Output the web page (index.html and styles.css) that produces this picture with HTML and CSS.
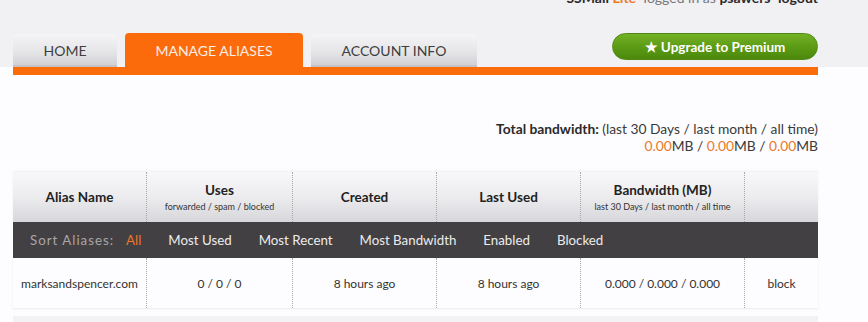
FILE: index.html
```html
<!DOCTYPE html>
<html>
<head>
<meta charset="utf-8">
<link rel="stylesheet" href="styles.css">
</head>
<body>
<div class="top">
  <div class="userline">
    <b>SSMail</b> <b class="lite">Lite</b> <span class="sep"></span>logged in as <b>psawers</b> <span class="sep"></span><b>logout</b>
  </div>
  <div class="navrow">
    <a class="tab">HOME</a>
    <a class="tab active">MANAGE ALIASES</a>
    <a class="tab">ACCOUNT INFO</a>
    <a class="upgrade">&#9733; Upgrade to Premium</a>
  </div>
</div>
<div class="wrap">
  <div class="orange-bar"></div>
  <div class="totals">
    <div><b>Total bandwidth:</b> (last 30 Days / last month / all time)</div>
    <div><span class="o">0.00</span>MB / <span class="o">0.00</span>MB / <span class="o">0.00</span>MB</div>
  </div>
  <div class="table">
    <div class="thead">
      <div class="c c1"><div class="h">Alias Name</div></div>
      <div class="c c2"><div class="h">Uses</div><div class="sub">forwarded / spam / blocked</div></div>
      <div class="c c3"><div class="h">Created</div></div>
      <div class="c c4"><div class="h">Last Used</div></div>
      <div class="c c5"><div class="h">Bandwidth (MB)</div><div class="sub">last 30 Days / last month / all time</div></div>
      <div class="c c6"></div>
    </div>
    <div class="sortbar">
      <span class="lbl">Sort Aliases:</span>
      <span class="on">All</span>
      <span>Most Used</span>
      <span>Most Recent</span>
      <span>Most Bandwidth</span>
      <span>Enabled</span>
      <span>Blocked</span>
    </div>
    <div class="row">
      <div class="c c1">marksandspencer.com</div>
      <div class="c c2">0 / 0 / 0</div>
      <div class="c c3">8 hours ago</div>
      <div class="c c4">8 hours ago</div>
      <div class="c c5">0.000 / 0.000 / 0.000</div>
      <div class="c c6">block</div>
    </div>
    <div class="row alt"></div>
  </div>
</div>
</body>
</html>
```

FILE: styles.css
```css
html, body { margin: 0; padding: 0; }
body {
  background: #fdfcfe;
  font-family: Lato, "Open Sans", sans-serif;
  color: #333;
  overflow: hidden;
  height: 322px;
}
.top {
  display: flow-root;
  background: #f1f0f3;
  height: 67px;
}
.userline {
  height: 14px;
  line-height: 14px;
  margin-top: -9px;
  font-size: 14px;
  color: #777;
  text-align: right;
  width: 818px;
}
.userline b { color: #2a2a2a; font-weight: 700; }
.userline b.lite { color: #f07623; }
.userline .sep { display: inline-block; width: 4px; }
.navrow {
  display: flex;
  align-items: flex-start;
  margin-left: 13px;
  width: 805px;
  margin-top: 28px;
  gap: 8px;
}
.tab {
  display: flex;
  align-items: center;
  justify-content: center;
  height: 33px;
  margin-top: 1px;
  background: linear-gradient(#f5f5f7, #e3e3e6 60%, #cfcfd3);
  border-radius: 4px 4px 0 0;
  font-size: 14px;
  color: #3e3e40;
  box-shadow: inset 0 -2px 0 #c4c4c8;
}
.tab:nth-child(1) { width: 104px; }
.tab:nth-child(2) { width: 178px; }
.tab:nth-child(3) { width: 166px; }
.tab.active {
  background: #fb6b0b;
  color: #fbeee4;
  height: 34px;
  margin-top: 0;
  box-shadow: none;
}
.upgrade {
  margin-left: auto;
  width: 206px;
  height: 27px;
  box-sizing: border-box;
  border-radius: 14px;
  background: linear-gradient(#73b124, #5a9a14 55%, #4c880c);
  border: 1px solid #4f8a14;
  color: #fff;
  font-size: 13.5px;
  font-weight: 700;
  display: flex;
  align-items: center;
  justify-content: center;
}
.wrap {
  margin-left: 13px;
  width: 805px;
}
.orange-bar {
  height: 8px;
  background: #fb6b0b;
}
.totals {
  margin-top: 45px;
  text-align: right;
  font-size: 13.8px;
  line-height: 17px;
  color: #3a3a3a;
}
.totals b { color: #2a2a2a; }
.totals .o { color: #e9792c; }
.table { margin-top: 18px; }
.thead, .row {
  display: grid;
  grid-template-columns: 134px 146px 144px 144px 164px 73px;
}
.thead {
  height: 50px;
  background: linear-gradient(#f8f8fa, #ececef 50%, #d7d7db);
  box-shadow: 0 -1px 2px rgba(0,0,0,0.06);
}
.c {
  display: flex;
  flex-direction: column;
  align-items: center;
  justify-content: center;
  border-right: 1px dotted #a8a8a8;
  text-align: center;
}
.c6 { border-right: none; }
.h { font-size: 13.5px; font-weight: 700; color: #222; }
.sub { font-size: 9px; color: #333; margin-top: 3px; }
.sortbar {
  height: 36px;
  background: #434043;
  display: flex;
  align-items: center;
  padding-left: 17px;
  gap: 27px;
  font-size: 13.3px;
  color: #ececec;
}
.sortbar .lbl { color: #a8a6a8; margin-right: -15px; letter-spacing: 1px; }
.sortbar .on { color: #ee7426; }
.row {
  height: 50px;
  background: #fdfcfe;
  box-shadow: 0 1px 2px rgba(0,0,0,0.08);
}
.row .c { font-size: 12px; color: #333; }
.row.alt {
  margin-top: 8px;
  height: 20px;
  background: #f2f2f4;
  box-shadow: none;
}
```
